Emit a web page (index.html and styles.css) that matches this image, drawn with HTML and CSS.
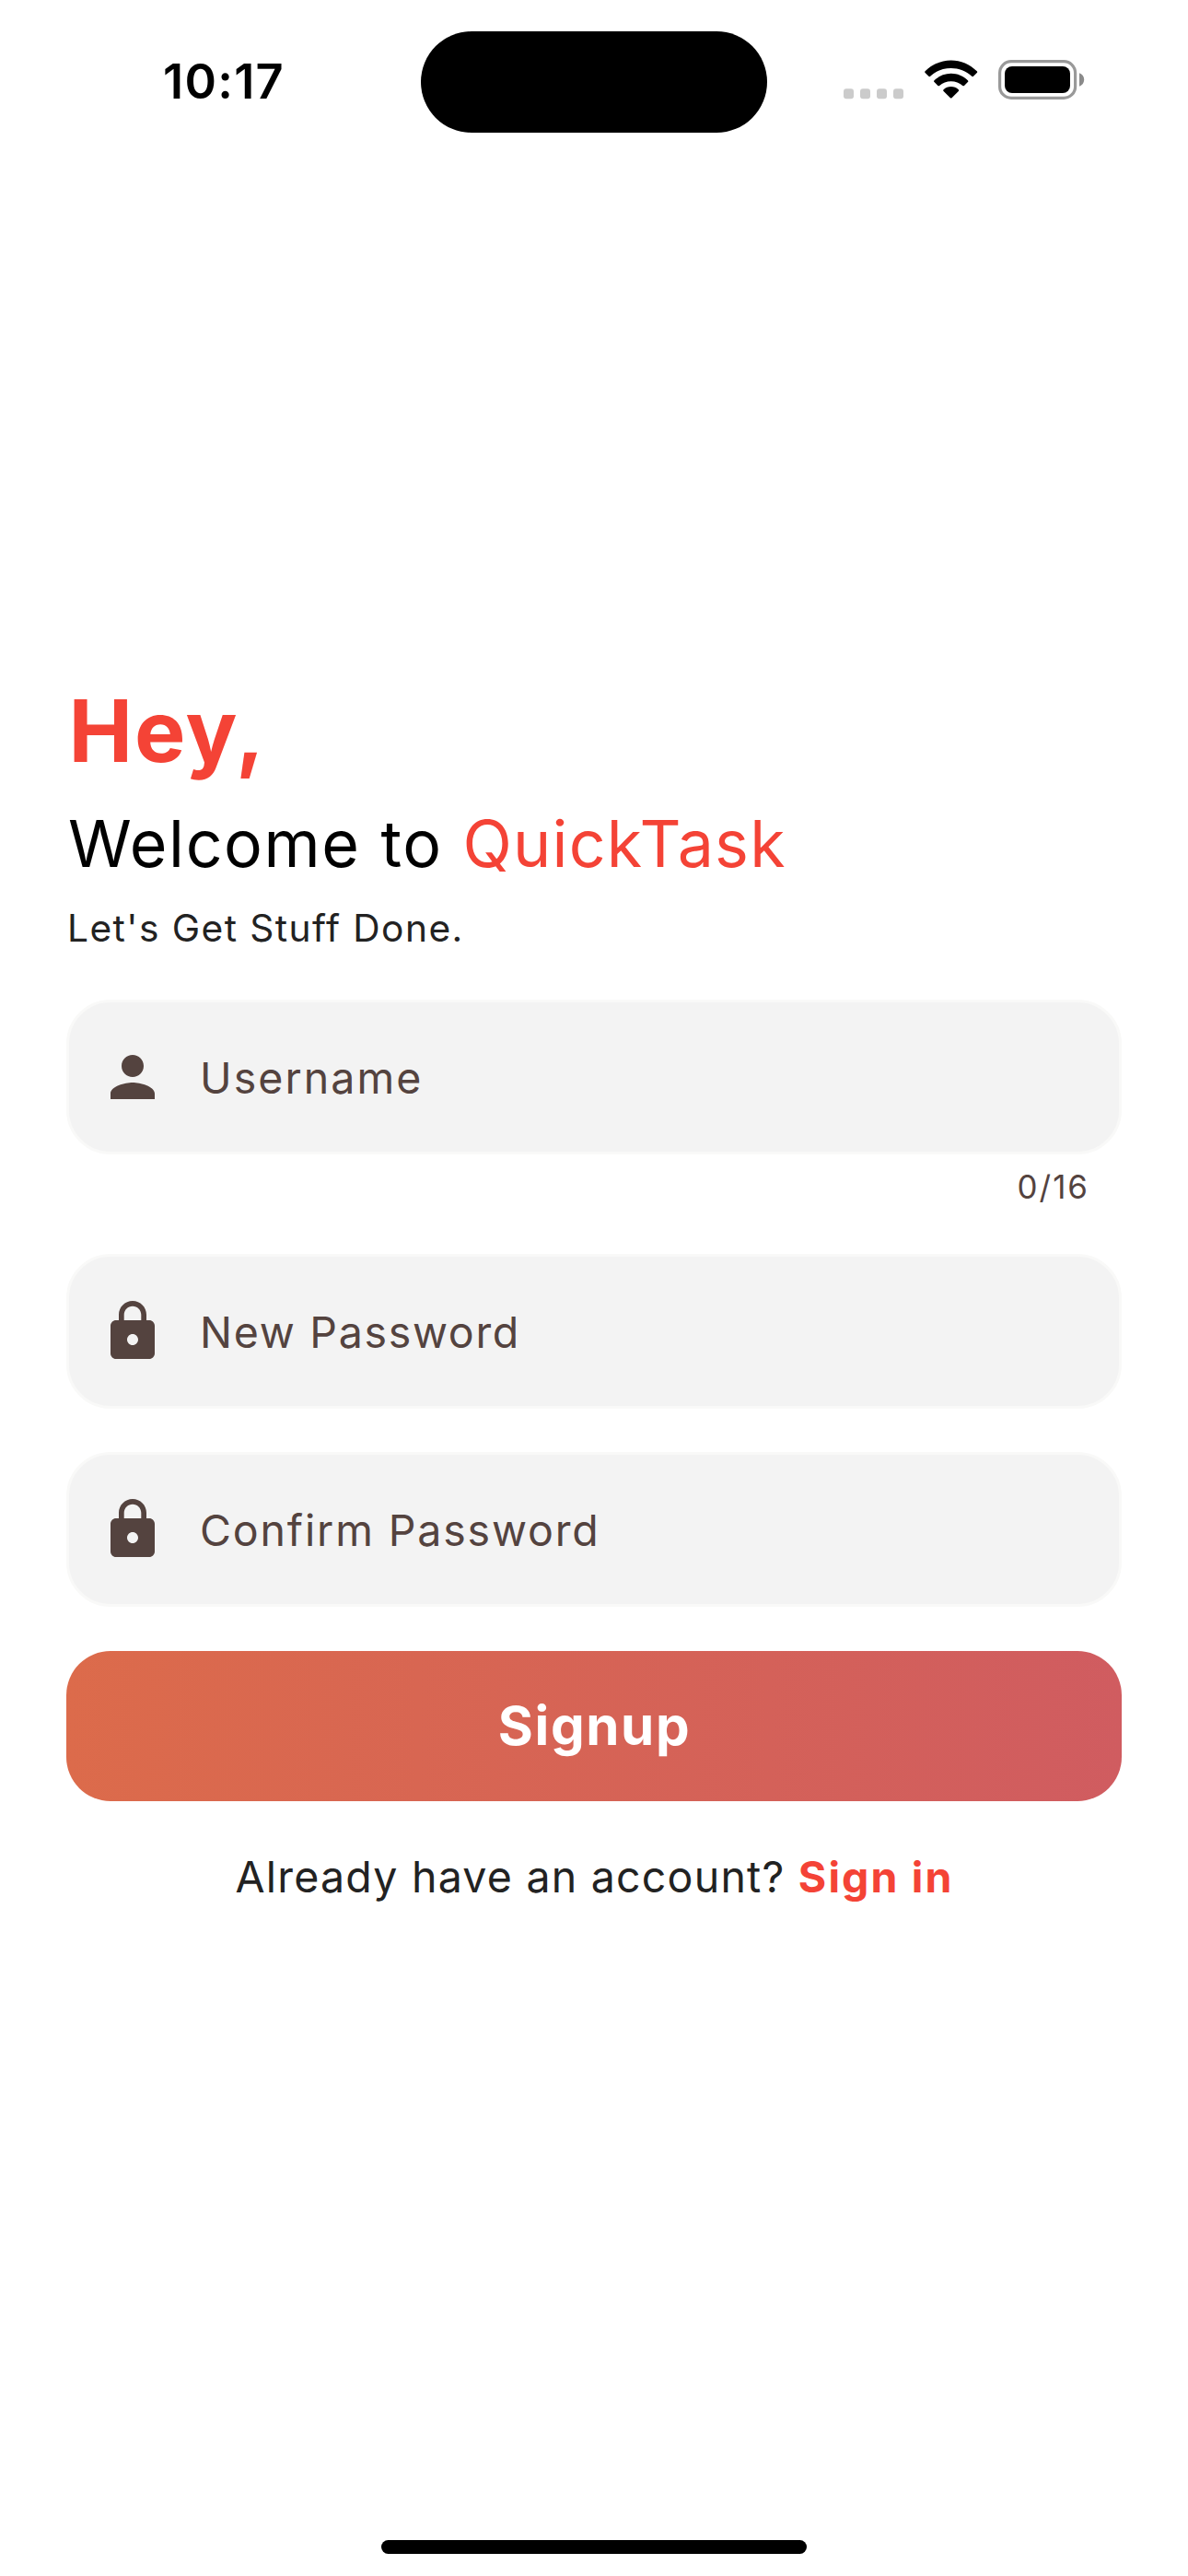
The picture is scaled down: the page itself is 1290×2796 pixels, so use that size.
FILE: index.html
```html
<!DOCTYPE html>
<html lang="en">
<head>
<meta charset="utf-8">
<title>QuickTask – Signup</title>
<link rel="stylesheet" href="styles.css">
</head>
<body>
<div class="screen">
  <header class="status-bar">
    <div class="time">10:17</div>
    <div class="island"></div>
    <div class="indicators">
      <svg class="signal" viewBox="0 0 65 12" width="65" height="12" fill="#cbcbcb">
        <rect x="0" y="0.3" width="11" height="11" rx="3"/>
        <rect x="18" y="0.3" width="11" height="11" rx="3"/>
        <rect x="36" y="0.3" width="11" height="11" rx="3"/>
        <rect x="54" y="0.3" width="11" height="11" rx="3"/>
      </svg>
      <svg class="wifi" viewBox="0 0 58 43" width="58" height="43">
        <path d="M0.6 12.2C8.2 4.7 18.2 0.4 28.7 0.4S49.2 4.7 56.8 12.2C57.4 12.8 57.4 13.4 56.8 14L53 17.8C52.4 18.4 51.8 18.4 51.2 17.8C45.1 11.9 37.1 8.9 28.7 8.9S12.3 11.9 6.2 17.8C5.6 18.4 5 18.4 4.4 17.8L0.6 14C0 13.4 0 12.8 0.6 12.2Z"/>
        <path d="M10.5 22.3C15.4 17.5 21.9 14.8 28.7 14.8S42 17.5 46.9 22.3C47.5 22.9 47.5 23.4 46.9 24L43 27.9C42.4 28.5 41.9 28.5 41.3 27.9C37.9 24.8 33.4 23.2 28.7 23.2S19.5 24.8 16.1 27.9C15.5 28.5 15 28.5 14.4 27.9L10.5 24C9.9 23.4 9.9 22.9 10.5 22.3Z"/>
        <path d="M20.6 32.2C22.8 30.2 25.7 29 28.7 29S34.6 30.2 36.8 32.2C37.4 32.8 37.4 33.3 36.8 33.9L29.5 41.2C29 41.7 28.4 41.7 27.9 41.2L20.6 33.9C20 33.3 20 32.8 20.6 32.2Z"/>
      </svg>
      <svg class="battery" viewBox="0 0 94 43" width="94" height="43">
        <rect x="1.6" y="1.6" width="82" height="39.8" rx="12.5" fill="none" stroke="#999" stroke-width="3.2"/>
        <rect x="7" y="7" width="71" height="29" rx="8"/>
        <path d="M88 14.3C91.2 15.5 93.2 18.2 93.2 21.5S91.2 27.500 88 28.7Z" fill="#8a8a8a"/>
      </svg>
    </div>
  </header>

  <main class="signup">
    <h1 class="greeting">Hey,</h1>
    <h2 class="welcome">Welcome to <span class="brand">QuickTask</span></h2>
    <p class="tagline">Let's Get Stuff Done.</p>

    <form class="form">
      <div class="field">
        <svg class="icon" viewBox="0 0 24 24"><path d="M12 12c2.21 0 4-1.79 4-4s-1.79-4-4-4-4 1.79-4 4 1.79 4 4 4zm0 2c-2.67 0-8 1.34-8 4v2h16v-2c0-2.66-5.33-4-8-4z"/></svg>
        <span class="label username">Username</span>
      </div>
      <div class="counter">0/16</div>
      <div class="field">
        <svg class="icon" viewBox="0 0 24 24"><path d="M18 8h-1V6c0-2.76-2.24-5-5-5S7 3.24 7 6v2H6c-1.1 0-2 .9-2 2v10c0 1.1.9 2 2 2h12c1.1 0 2-.9 2-2V10c0-1.1-.9-2-2-2zm-6 9c-1.1 0-2-.9-2-2s.9-2 2-2 2 .9 2 2-.9 2-2 2zm3.1-9H8.900V6c0-1.71 1.39-3.1 3.1-3.1s3.1 1.39 3.1 3.1v2z"/></svg>
        <span class="label new-password">New Password</span>
      </div>
      <div class="field confirm">
        <svg class="icon" viewBox="0 0 24 24"><path d="M18 8h-1V6c0-2.76-2.24-5-5-5S7 3.24 7 6v2H6c-1.1 0-2 .9-2 2v10c0 1.1.9 2 2 2h12c1.1 0 2-.9 2-2V10c0-1.1-.9-2-2-2zm-6 9c-1.1 0-2-.9-2-2s.9-2 2-2 2 .9 2 2-.9 2-2 2zm3.1-9H8.900V6c0-1.71 1.39-3.1 3.1-3.1s3.1 1.39 3.1 3.1v2z"/></svg>
        <span class="label">Confirm Password</span>
      </div>
      <button class="submit" type="button">Signup</button>
    </form>

    <p class="signin">Already have an account? <a class="signin-link">Sign in</a></p>
  </main>

  <div class="home-indicator"></div>
</div>
</body>
</html>
```
FILE: styles.css
```css
* {
  box-sizing: border-box;
}

body {
  margin: 0;
  background: #fff;
  font-family: Inter, "Liberation Sans", sans-serif;
  color: #222;
}

.screen {
  display: flex;
  flex-direction: column;
  width: 1290px;
  height: 2796px;
  overflow: hidden;
}

/* Status bar */
.status-bar {
  display: grid;
  grid-template-columns: 1fr 376px 1fr;
  align-items: center;
  height: 177px;
  color: #000;
}

.time {
  margin-top: -2px;
  padding-left: 177px;
  font-size: 52.3px;
  font-weight: 600;
  line-height: 64px;
  letter-spacing: 1.3px;
}

.island {
  height: 110px;
  border-radius: 55px;
  background: #000;
}

.indicators {
  display: flex;
  align-items: center;
  height: 43px;
  padding-left: 83px;
  margin-top: -4px;
}

.signal {
  align-self: flex-end;
  margin-right: 23px;
}

.wifi {
  margin-right: 22px;
}

/* Form column */
.signup {
  display: flex;
  flex-direction: column;
  padding: 559px 72px 0;
}

.greeting {
  margin: 0 0 23px 2.5px;
  font-size: 93.1px;
  font-weight: 700;
  line-height: 114px;
  letter-spacing: 1.9px;
  color: #f44336;
}

.welcome {
  margin: 0 0 24px 2px;
  font-size: 69.8px;
  font-weight: 400;
  line-height: 86px;
  letter-spacing: 1.6px;
  word-spacing: 0.6px;
  color: #000;
}

.brand {
  letter-spacing: 1.25px;
  color: #f44336;
}

.tagline {
  margin: 0 0 52px 1px;
  font-size: 40.7px;
  line-height: 50px;
  letter-spacing: 1.43px;
}

.form {
  display: flex;
  flex-direction: column;
}

.field {
  display: flex;
  align-items: center;
  gap: 37px;
  height: 168px;
  padding-left: 33px;
  border: 3px solid #f9f9f8;
  border-radius: 48px;
  background: #f3f3f3;
  color: #54433f;
}

.icon {
  width: 72px;
  height: 72px;
  fill: #54433f;
}

.label {
  padding-top: 1px;
  font-size: 46.5px;
  line-height: 58px;
  letter-spacing: 1.85px;
}

.username {
  letter-spacing: 2.07px;
}

.new-password {
  letter-spacing: 1.7px;
}

.counter {
  margin: 13px 35px 51px 0;
  font-size: 34.9px;
  line-height: 44px;
  letter-spacing: 2px;
  text-align: right;
  color: #54433f;
}

.confirm {
  margin: 47px 0 48px;
}

.submit {
  height: 163px;
  padding: 0 0 2px 1px;
  border: 0;
  border-radius: 48px;
  background: linear-gradient(90deg, #dc6b4b, #d05c60);
  font-family: inherit;
  font-size: 58.2px;
  font-weight: 700;
  letter-spacing: 1.6px;
  color: #fff;
}

.signin {
  margin: 53px 0 0;
  padding-left: 1px;
  font-size: 46.5px;
  line-height: 58px;
  letter-spacing: 1.22px;
  text-align: center;
}

.signin-link {
  font-weight: 700;
  letter-spacing: 2.1px;
  color: #f44336;
}

.home-indicator {
  flex: none;
  align-self: center;
  width: 462px;
  height: 15px;
  margin: auto 0 24px;
  border-radius: 8px;
  background: #000;
}
```
